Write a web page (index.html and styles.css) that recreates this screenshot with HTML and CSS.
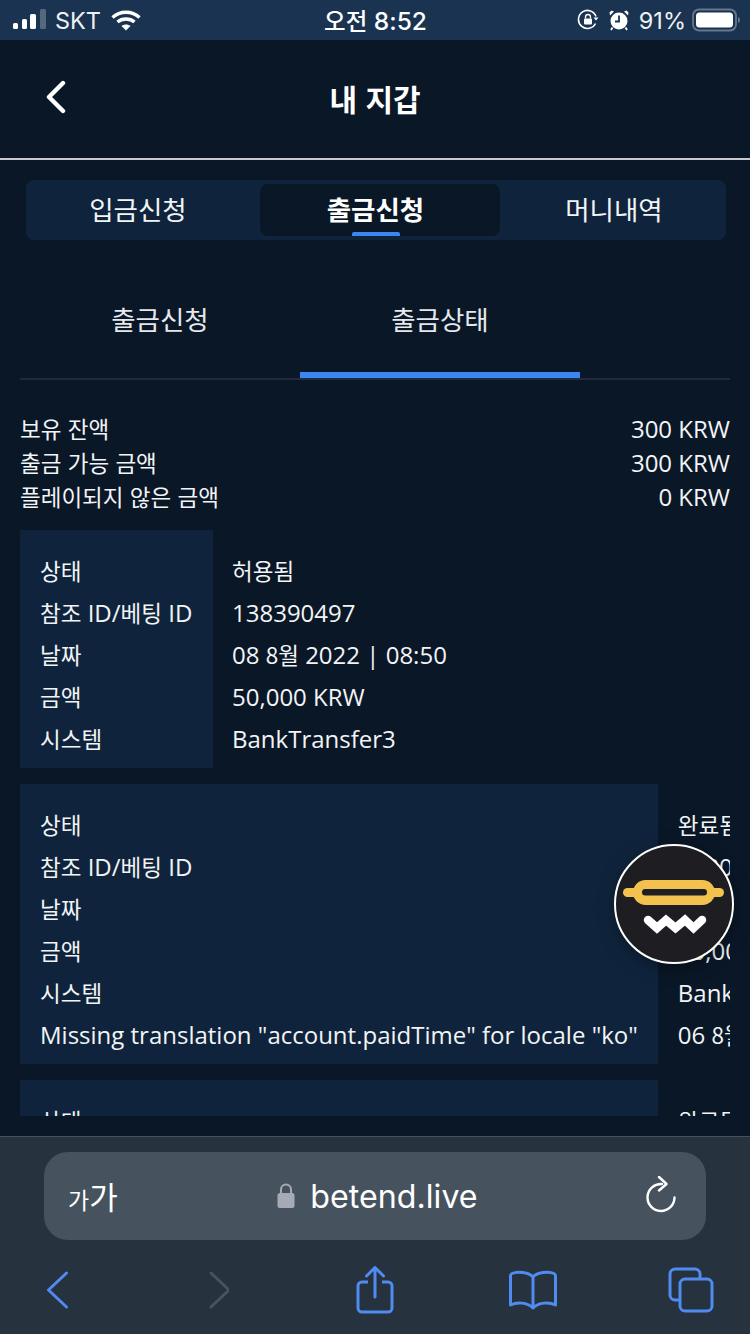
FILE: index.html
```html
<!DOCTYPE html>
<html lang="ko">
<head>
<meta charset="utf-8">
<title>내 지갑</title>
<link rel="stylesheet" href="styles.css">
</head>
<body>
<div class="phone">
  <div class="status">
    <div class="status-side">
      <svg class="signal" width="34" height="22" viewBox="0 0 34 22"><rect x="0" y="14" width="5" height="6" rx="1.5" fill="#fff"/><rect x="9" y="10" width="5" height="10" rx="1.5" fill="#fff"/><rect x="17" y="5" width="6" height="15" rx="1.5" fill="#fff"/><rect x="27" y="0" width="6" height="20" rx="1.5" fill="#56697c"/></svg>
      <span class="carrier">SKT</span>
      <svg class="wifi" width="30" height="22" viewBox="0 0 30 22"><path d="M1.5 8.5C9 1.5 21 1.500 28.500 8.500" fill="none" stroke="#fff" stroke-width="3.400"/><path d="M6.500 13C11 9 19 9 23.500 13" fill="none" stroke="#fff" stroke-width="3.400"/><path d="M10.500 17C13 15 17 15 19.500 17L15 21.500Z" fill="#fff"/></svg>
    </div>
    <div class="clock"><span class="ko-clock">오전</span> 8:52</div>
    <div class="status-side">
      <svg width="22" height="22" viewBox="0 0 22 22"><path d="M18.500 14.500A9 9 0 1 1 19 7.500" fill="none" stroke="#fff" stroke-width="1.600"/><path d="M16.500 8.500h5l-2.500 3z" fill="#fff"/><rect x="7" y="9.500" width="8" height="6" rx="1" fill="#fff"/><path d="M8.500 9.500V8a2.500 2.500 0 0 1 5 0v1.500" fill="none" stroke="#fff" stroke-width="1.300"/></svg>
      <svg class="alarm" width="20" height="22" viewBox="0 0 20 22"><circle cx="10" cy="12" r="8.500" fill="#fff"/><path d="M1 6.500 5 2.500 2.500 1.500 0.500 3.500zM19 6.500 15 2.500 17.500 1.500 19.500 3.500z" fill="#fff"/><path d="M10 6.500V12.500H6" fill="none" stroke="#1a3350" stroke-width="1.800"/><path d="M3.500 18.500 2 21M16.500 18.500 18 21" stroke="#fff" stroke-width="1.800"/></svg>
      <span class="battery-text">91%</span>
      <svg class="battery" width="48" height="24" viewBox="0 0 48 24"><rect x="1" y="1.500" width="43" height="21" rx="6" fill="none" stroke="#66788a" stroke-width="1.800"/><rect x="4" y="4.500" width="37" height="15" rx="3.500" fill="#fff"/><path d="M46 9v6c1.500-.6 2-1.800 2-3s-.5-2.400-2-3z" fill="#66788a"/></svg>
    </div>
  </div>

  <header class="topbar">
    <svg class="back" width="22" height="34" viewBox="0 0 22 34"><path d="M19 3 5 17l14 14" fill="none" stroke="#fff" stroke-width="4.400" stroke-linecap="round" stroke-linejoin="round"/></svg>
    <h1 class="title">내 지갑</h1>
  </header>

  <main class="content">
    <nav class="tabs">
      <a class="tab tab-first">입금신청</a>
      <a class="tab tab-active">출금신청</a>
      <a class="tab tab-last">머니내역</a>
    </nav>

    <nav class="subtabs">
      <a class="subtab">출금신청</a>
      <a class="subtab subtab-active">출금상태</a>
    </nav>

    <section class="balance">
      <div class="balance-row"><span class="ko">보유 잔액</span><span>300 KRW</span></div>
      <div class="balance-row"><span class="ko">출금 가능 금액</span><span>300 KRW</span></div>
      <div class="balance-row"><span class="ko">플레이되지 않은 금액</span><span>0 KRW</span></div>
    </section>

    <section class="records">
      <table class="record record-short">
        <tr><th><span class="ko">상태</span></th><td><span class="ko">허용됨</span></td></tr>
        <tr><th><span class="ko">참조</span> ID/<span class="ko">베팅</span> ID</th><td>138390497</td></tr>
        <tr><th><span class="ko">날짜</span></th><td>08 <span class="ko">8월</span> 2022 | 08:50</td></tr>
        <tr><th><span class="ko">금액</span></th><td>50,000 KRW</td></tr>
        <tr><th><span class="ko">시스템</span></th><td>BankTransfer3</td></tr>
      </table>
      <table class="record">
        <tr><th><span class="ko">상태</span></th><td><span class="ko">완료됨</span></td></tr>
        <tr><th><span class="ko">참조</span> ID/<span class="ko">베팅</span> ID</th><td>138039217</td></tr>
        <tr><th><span class="ko">날짜</span></th><td>06 <span class="ko">8월</span> 2022 | 12:41</td></tr>
        <tr><th><span class="ko">금액</span></th><td>50,000 KRW</td></tr>
        <tr><th><span class="ko">시스템</span></th><td>BankTransfer3</td></tr>
        <tr><th>Missing translation "account.paidTime" for locale "ko"</th><td>06 <span class="ko">8월</span> 2022 | 12:58</td></tr>
      </table>
      <table class="record record-wide">
        <tr><th><span class="ko">상태</span></th><td><span class="ko">완료됨</span></td></tr>
      </table>
    </section>
  </main>

  <div class="fab">
    <svg width="116" height="116" viewBox="0 0 116 116">
      <rect x="7" y="42" width="101" height="9" rx="4.500" fill="#f2c14e"/>
      <rect x="17" y="34" width="82" height="25" rx="12.500" fill="#f2c14e"/>
      <rect x="26" y="43" width="65" height="6.500" rx="3.250" fill="#1e1e22"/>
      <path d="M32 74 41 82 50 74 59.500 82 69 74 77.500 82 86 74" fill="none" stroke="#fff" stroke-width="8.500" stroke-linecap="round"/>
    </svg>
  </div>

  <div class="safari">
    <div class="urlbar">
      <span class="aa"><span class="aa-small">가</span>가</span>
      <div class="address">
        <svg width="18" height="26" viewBox="0 0 18 26"><rect x="0.500" y="10" width="17" height="15" rx="2.500" fill="#a5abb5"/><path d="M4 11V6.500a5 5 0 0 1 10 0V11" fill="none" stroke="#a5abb5" stroke-width="2"/></svg>
        <span class="domain">betend.live</span>
      </div>
      <svg class="reload" width="32" height="38" viewBox="0 0 32 38"><path d="M28.500 21.500A13.500 13.500 0 1 1 16 8" fill="none" stroke="#fff" stroke-width="2.400" stroke-linecap="round"/><path d="M13 1 20.500 8 13 14.500" fill="none" stroke="#fff" stroke-width="2.400" stroke-linecap="round" stroke-linejoin="round"/></svg>
    </div>
    <div class="toolbar">
      <svg width="24" height="38" viewBox="1.500 0 24 38"><path d="M21 2 3 19l18 17" fill="none" stroke="#4f8bf0" stroke-width="3" stroke-linecap="round" stroke-linejoin="round"/></svg>
      <svg width="24" height="38" viewBox="-3 0 24 38"><path d="M3 2l18 17L3 36" fill="none" stroke="#4a525c" stroke-width="3" stroke-linecap="round" stroke-linejoin="round"/></svg>
      <svg width="38" height="48" viewBox="0 0 38 48"><path d="M12 16H6a4 4 0 0 0-4 4v22a4 4 0 0 0 4 4h26a4 4 0 0 0 4-4V20a4 4 0 0 0-4-4h-6" fill="none" stroke="#4f8bf0" stroke-width="3"/><path d="M19 31V2M10.500 10 19 1.500 27.500 10" fill="none" stroke="#4f8bf0" stroke-width="3" stroke-linecap="round" stroke-linejoin="round"/></svg>
      <svg width="48" height="40" viewBox="0 0 48 40"><path d="M24 7C20 2 8 1 3 3.500c-1 .5-1.500 1-1.500 2V35c6-3 17-3 22.500 3 5.500-6 16.500-6 22.500-3V5.500c0-1-.5-1.500-1.500-2C40 1 28 2 24 7ZM24 7V37" fill="none" stroke="#4f8bf0" stroke-width="3" stroke-linejoin="round"/></svg>
      <svg width="46" height="46" viewBox="0 0 46 46"><path d="M11 33H7a5 5 0 0 1-5-5V7a5 5 0 0 1 5-5h20a5 5 0 0 1 5 5v4" fill="none" stroke="#4f8bf0" stroke-width="3"/><rect x="12" y="12" width="32" height="32" rx="5" fill="none" stroke="#4f8bf0" stroke-width="3"/></svg>
    </div>
  </div>
</div>
</body>
</html>
```
FILE: styles.css
```css
* { box-sizing: border-box; }
html, body { margin: 0; padding: 0; background: #0a1727; }
body {
  font-family: "Open Sans", "Noto Sans CJK KR", sans-serif;
  font-size: 24px;
  color: #f2f4f6;
}
.phone {
  position: relative;
  width: 750px;
  height: 1334px;
  display: flex;
  flex-direction: column;
  overflow: hidden;
  background: #0a1727;
}
.ko { font-family: "Noto Sans CJK KR", sans-serif; font-size: 22.500px; }

.status {
  height: 40px;
  flex: none;
  background: #1a3350;
  display: flex;
  align-items: center;
  justify-content: space-between;
  padding: 0 10px 0 13px;
  color: #fff;
  font-family: "Inter", sans-serif;
  font-size: 24px;
}
.status-side { display: flex; align-items: center; gap: 8px; width: 180px; }
.status-side:last-child { justify-content: flex-end; gap: 10px; }
.wifi { margin-left: 2px; }
.battery { margin-left: -4px; }
.carrier { color: #eef1f4; font-size: 23.500px; }
.clock { font-size: 24.500px; font-weight: 500; padding-right: 2px; }
.ko-clock { font-family: "Noto Sans CJK KR", sans-serif; font-size: 23.500px; }
.battery-text { font-size: 23.500px; color: #eef1f4; }

.topbar {
  position: relative;
  flex: none;
  height: 120px;
  border-bottom: 2px solid #c8cacc;
  display: flex;
  align-items: center;
  justify-content: center;
  padding-bottom: 2px;
}
.back { position: absolute; left: 44px; top: 40px; }
.title {
  margin: 0;
  font-family: "Noto Sans CJK KR", sans-serif;
  font-size: 30px;
  font-weight: 700;
  color: #fff;
}

.content {
  height: 956px;
  flex: none;
  overflow: hidden;
  padding: 20px 20px 0;
}
.tabs {
  margin: 0 4px 0 6px;
  height: 60px;
  padding: 4px 0;
  background: #0f243c;
  border-radius: 8px;
  display: grid;
  grid-template-columns: 234px 240px 226px;
}
.tab {
  position: relative;
  display: flex;
  align-items: center;
  justify-content: center;
  font-family: "Noto Sans CJK KR", sans-serif;
  font-size: 26.500px;
  border-radius: 8px;
  padding-bottom: 4px;
}
.tab-first { padding-right: 10px; }
.tab-last { padding-left: 2px; }
.tab-active { background: #0a1727; font-weight: 700; color: #fff; padding-right: 9px; }
.tab-active::after {
  content: "";
  position: absolute;
  left: 92px;
  bottom: 0;
  width: 48px;
  height: 4px;
  border-radius: 2px 2px 0 0;
  background: #3b86f0;
}

.subtabs {
  margin-top: 20px;
  height: 120px;
  display: grid;
  grid-template-columns: 280px 280px;
  border-bottom: 2px solid #1f2b3a;
}
.subtab {
  display: flex;
  align-items: center;
  justify-content: center;
  font-family: "Noto Sans CJK KR", sans-serif;
  font-size: 26.500px;
  color: #e6e8ec;
  padding-bottom: 2px;
}
.subtab-active { box-shadow: inset 0 -6px 0 #3b86f0; }

.balance { margin-top: 31px; }
.balance-row {
  height: 34px;
  display: flex;
  align-items: center;
  justify-content: space-between;
}

.records {
  margin-top: 17px;
  width: 710px;
  display: flex;
  flex-direction: column;
  gap: 16px;
  align-items: flex-start;
  overflow: hidden;
  height: 586px;
}
.record {
  flex: none;
  width: max-content;
  border-collapse: collapse;
}
.record th {
  background: #0f243c;
  font-weight: 400;
  text-align: left;
  padding: 0 20px 2px;
  height: 42px;
  white-space: nowrap;
}
.record td {
  padding: 0 20px 2px;
  height: 42px;
  white-space: nowrap;
}
.record tr:first-child th, .record tr:first-child td { height: 62px; padding-top: 20px; }
.record tr:last-child th, .record tr:last-child td { height: 50px; padding-bottom: 10px; }
.record tr:only-child th, .record tr:only-child td { height: 62px; padding-bottom: 2px; }
.record-short th { width: 193px; }
.record-short td { padding-left: 19px; }
.record-wide th { width: 638px; }

.fab {
  position: absolute;
  left: 614px;
  top: 844px;
  width: 120px;
  height: 120px;
  border-radius: 50%;
  border: 2px solid #fff;
  background: #1e1e22;
  box-shadow: 0 4px 18px rgba(0,0,0,.35);
  display: flex;
  align-items: center;
  justify-content: center;
}

.safari {
  position: absolute;
  left: 0;
  right: 0;
  bottom: 0;
  height: 198px;
  background: #27323f;
  border-top: 1px solid #47505b;
  padding: 15px 44px 0;
}
.urlbar {
  position: relative;
  height: 88px;
  border-radius: 24px;
  background: #46535f;
  display: flex;
  align-items: center;
  justify-content: center;
  color: #fff;
}
.aa {
  position: absolute;
  left: 24px;
  top: 26px;
  font-family: "Noto Sans CJK KR", sans-serif;
  font-size: 31px;
  line-height: 36px;
}
.aa-small { font-size: 23px; }
.address { display: flex; align-items: center; gap: 15px; margin-left: 5px; }
.domain { font-family: "Inter", sans-serif; font-size: 32.200px; color: #fff; }
.reload { position: absolute; right: 28px; top: 24px; }
.toolbar {
  height: 95px;
  display: grid;
  grid-template-columns: repeat(5, 158px);
  justify-items: center;
  align-items: center;
  padding: 4px 0 0;
  margin: 0 -64px;
}
```
